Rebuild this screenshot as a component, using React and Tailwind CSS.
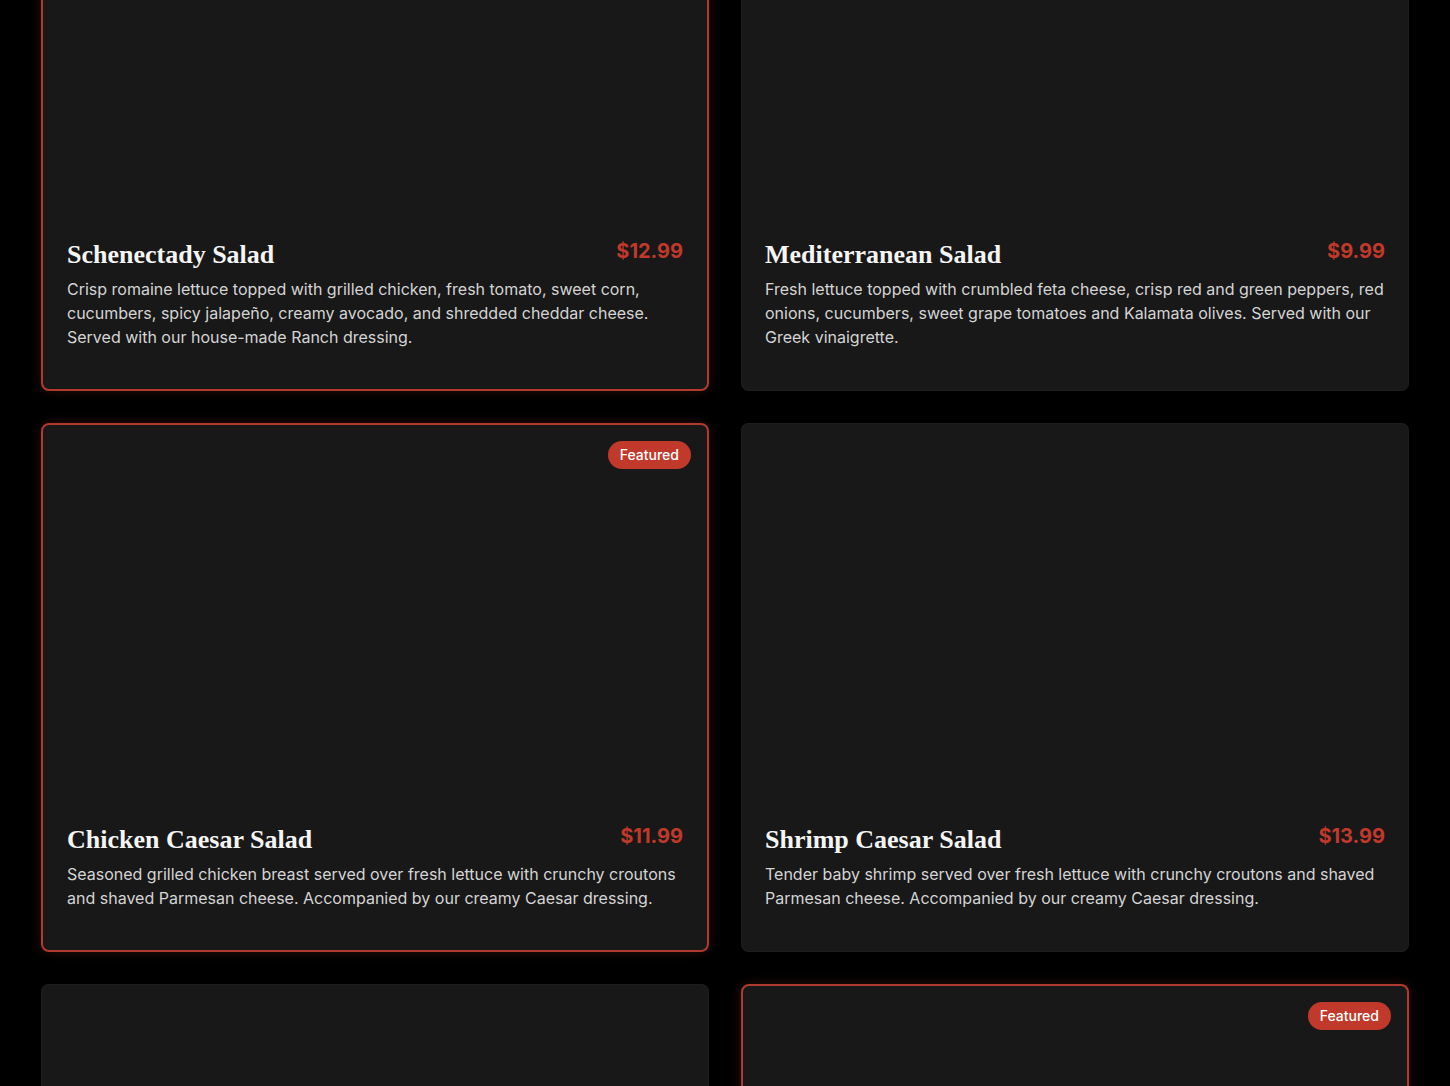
const items = [
  {
    name: "Schenectady Salad",
    price: "$12.99",
    desc: "Crisp romaine lettuce topped with grilled chicken, fresh tomato, sweet corn, cucumbers, spicy jalapeño, creamy avocado, and shredded cheddar cheese. Served with our house-made Ranch dressing.",
    highlight: true,
  },
  {
    name: "Mediterranean Salad",
    price: "$9.99",
    desc: "Fresh lettuce topped with crumbled feta cheese, crisp red and green peppers, red onions, cucumbers, sweet grape tomatoes and Kalamata olives. Served with our Greek vinaigrette.",
  },
  {
    name: "Chicken Caesar Salad",
    price: "$11.99",
    desc: "Seasoned grilled chicken breast served over fresh lettuce with crunchy croutons and shaved Parmesan cheese. Accompanied by our creamy Caesar dressing.",
    highlight: true,
    featured: true,
  },
  {
    name: "Shrimp Caesar Salad",
    price: "$13.99",
    desc: "Tender baby shrimp served over fresh lettuce with crunchy croutons and shaved Parmesan cheese. Accompanied by our creamy Caesar dressing.",
  },
  {
    name: "Garden Salad",
    price: "$8.99",
    desc: "Crisp mixed greens with tomatoes, cucumbers, red onions and shredded carrots. Served with your choice of dressing.",
  },
  {
    name: "Steak Salad",
    price: "$14.99",
    desc: "Sliced grilled steak over fresh greens with tomatoes, red onions and blue cheese crumbles. Served with balsamic vinaigrette.",
    highlight: true,
    featured: true,
  },
];

function MenuCard({ item }) {
  return (
    <div
      className={`relative overflow-hidden rounded-lg bg-[#181818] ${
        item.highlight
          ? "border-2 border-[#b03a2e] shadow-[0_0_12px_rgba(176,58,46,0.25)]"
          : "shadow-[inset_0_0_0_1px_#1e1e1e]"
      }`}
    >
      {item.featured && (
        <span className="absolute top-4 right-4 rounded-full bg-[#c0392b] px-3 py-1 text-sm font-medium leading-5 text-white">
          Featured
        </span>
      )}
      {/* image placeholder */}
      <div className="aspect-video w-full" />
      <div className="px-6 pt-6 pb-10">
        <div className="flex items-start justify-between gap-4">
          <h3 className="font-['Liberation_Serif',serif] text-[26px] font-bold leading-[36px] text-[#f5f5f5]">
            {item.name}
          </h3>
          <span className="text-xl font-bold leading-7 text-[#c0392b]">
            {item.price}
          </span>
        </div>
        <p className="mt-1 text-base leading-6 text-[#d4d4d4]">{item.desc}</p>
      </div>
    </div>
  );
}

export default function App() {
  return (
    <div className="h-[1086px] overflow-hidden bg-black font-['Inter',sans-serif]">
      <div className="-mt-[163px] grid grid-cols-2 gap-8 px-[41px]">
        {items.map((item) => (
          <MenuCard key={item.name} item={item} />
        ))}
      </div>
    </div>
  );
}
